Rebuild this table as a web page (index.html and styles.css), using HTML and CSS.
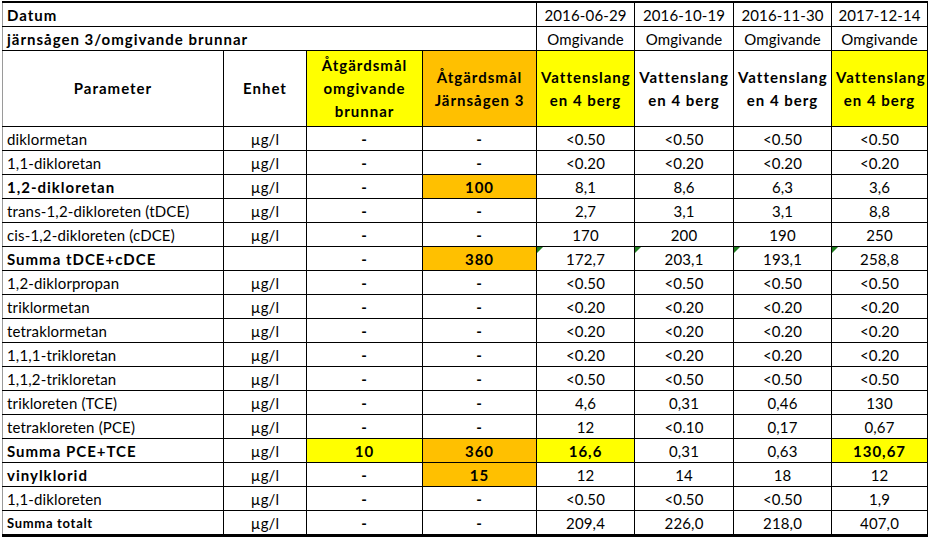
FILE: index.html
```html
<!DOCTYPE html>
<html>
<head>
<meta charset="utf-8">
<link rel="stylesheet" href="styles.css">
</head>
<body>
<table class="sheet">
<colgroup>
<col class="c1"><col class="c2"><col class="c3"><col class="c4"><col class="c5"><col class="c6"><col class="c7"><col class="c8">
</colgroup>
<tr class="r-top">
<td class="lbl b" colspan="4">Datum</td>
<td class="ctr sep">2016-06-29</td><td class="ctr">2016-10-19</td><td class="ctr">2016-11-30</td><td class="ctr">2017-12-14</td>
</tr>
<tr class="r-top">
<td class="lbl b" colspan="4">järnsågen 3/omgivande brunnar</td>
<td class="ctr sep">Omgivande</td><td class="ctr">Omgivande</td><td class="ctr">Omgivande</td><td class="ctr">Omgivande</td>
</tr>
<tr class="r-head">
<td class="ctr b">Parameter</td>
<td class="ctr b">Enhet</td>
<td class="ctr b yel">Åtgärdsmål<br>omgivande<br>brunnar</td>
<td class="ctr b org">Åtgärdsmål<br>Järnsågen 3</td>
<td class="ctr b yel sep">Vattenslang<br>en 4 berg</td>
<td class="ctr b">Vattenslang<br>en 4 berg</td>
<td class="ctr b">Vattenslang<br>en 4 berg</td>
<td class="ctr b yel">Vattenslang<br>en 4 berg</td>
</tr>
<tr><td class="lbl">diklormetan</td><td class="ctr">µg/l</td><td class="ctr b">-</td><td class="ctr b">-</td><td class="ctr sep">&lt;0.50</td><td class="ctr">&lt;0.50</td><td class="ctr">&lt;0.50</td><td class="ctr">&lt;0.50</td></tr>
<tr><td class="lbl">1,1-dikloretan</td><td class="ctr">µg/l</td><td class="ctr b">-</td><td class="ctr b">-</td><td class="ctr sep">&lt;0.20</td><td class="ctr">&lt;0.20</td><td class="ctr">&lt;0.20</td><td class="ctr">&lt;0.20</td></tr>
<tr><td class="lbl b">1,2-dikloretan</td><td class="ctr">µg/l</td><td class="ctr b">-</td><td class="ctr b org">100</td><td class="ctr sep">8,1</td><td class="ctr">8,6</td><td class="ctr">6,3</td><td class="ctr">3,6</td></tr>
<tr><td class="lbl">trans-1,2-dikloreten (tDCE)</td><td class="ctr">µg/l</td><td class="ctr b">-</td><td class="ctr b">-</td><td class="ctr sep">2,7</td><td class="ctr">3,1</td><td class="ctr">3,1</td><td class="ctr">8,8</td></tr>
<tr><td class="lbl">cis-1,2-dikloreten (cDCE)</td><td class="ctr">µg/l</td><td class="ctr b">-</td><td class="ctr b">-</td><td class="ctr sep">170</td><td class="ctr">200</td><td class="ctr">190</td><td class="ctr">250</td></tr>
<tr><td class="lbl b">Summa tDCE+cDCE</td><td class="ctr"></td><td class="ctr b">-</td><td class="ctr b org">380</td><td class="ctr sep flag">172,7</td><td class="ctr flag">203,1</td><td class="ctr flag">193,1</td><td class="ctr flag">258,8</td></tr>
<tr><td class="lbl">1,2-diklorpropan</td><td class="ctr">µg/l</td><td class="ctr b">-</td><td class="ctr b">-</td><td class="ctr sep">&lt;0.50</td><td class="ctr">&lt;0.50</td><td class="ctr">&lt;0.50</td><td class="ctr">&lt;0.50</td></tr>
<tr><td class="lbl">triklormetan</td><td class="ctr">µg/l</td><td class="ctr b">-</td><td class="ctr b">-</td><td class="ctr sep">&lt;0.20</td><td class="ctr">&lt;0.20</td><td class="ctr">&lt;0.20</td><td class="ctr">&lt;0.20</td></tr>
<tr><td class="lbl">tetraklormetan</td><td class="ctr">µg/l</td><td class="ctr b">-</td><td class="ctr b">-</td><td class="ctr sep">&lt;0.20</td><td class="ctr">&lt;0.20</td><td class="ctr">&lt;0.20</td><td class="ctr">&lt;0.20</td></tr>
<tr><td class="lbl">1,1,1-trikloretan</td><td class="ctr">µg/l</td><td class="ctr b">-</td><td class="ctr b">-</td><td class="ctr sep">&lt;0.20</td><td class="ctr">&lt;0.20</td><td class="ctr">&lt;0.20</td><td class="ctr">&lt;0.20</td></tr>
<tr><td class="lbl">1,1,2-trikloretan</td><td class="ctr">µg/l</td><td class="ctr b">-</td><td class="ctr b">-</td><td class="ctr sep">&lt;0.50</td><td class="ctr">&lt;0.50</td><td class="ctr">&lt;0.50</td><td class="ctr">&lt;0.50</td></tr>
<tr><td class="lbl">trikloreten (TCE)</td><td class="ctr">µg/l</td><td class="ctr b">-</td><td class="ctr b">-</td><td class="ctr sep">4,6</td><td class="ctr">0,31</td><td class="ctr">0,46</td><td class="ctr">130</td></tr>
<tr><td class="lbl">tetrakloreten (PCE)</td><td class="ctr">µg/l</td><td class="ctr b">-</td><td class="ctr b">-</td><td class="ctr sep">12</td><td class="ctr">&lt;0.10</td><td class="ctr">0,17</td><td class="ctr">0,67</td></tr>
<tr><td class="lbl b">Summa PCE+TCE</td><td class="ctr">µg/l</td><td class="ctr b yel">10</td><td class="ctr b org">360</td><td class="ctr b yel sep">16,6</td><td class="ctr">0,31</td><td class="ctr">0,63</td><td class="ctr b yel">130,67</td></tr>
<tr><td class="lbl b">vinylklorid</td><td class="ctr">µg/l</td><td class="ctr b">-</td><td class="ctr b org">15</td><td class="ctr sep">12</td><td class="ctr">14</td><td class="ctr">18</td><td class="ctr">12</td></tr>
<tr><td class="lbl">1,1-dikloreten</td><td class="ctr">µg/l</td><td class="ctr b">-</td><td class="ctr b">-</td><td class="ctr sep">&lt;0.50</td><td class="ctr">&lt;0.50</td><td class="ctr">&lt;0.50</td><td class="ctr">1,9</td></tr>
<tr class="r-last"><td class="lbl b small">Summa totalt</td><td class="ctr">µg/l</td><td class="ctr b">-</td><td class="ctr b">-</td><td class="ctr sep">209,4</td><td class="ctr">226,0</td><td class="ctr">218,0</td><td class="ctr">407,0</td></tr>
</table>
</body>
</html>
```
FILE: styles.css
```css
html, body {
  margin: 0;
  padding: 0;
  background: #ffffff;
}
body {
  font-family: "Lato", "Open Sans", sans-serif;
  font-size: 15px;
  letter-spacing: 0.15px;
  color: #000;
}
.sheet {
  border-collapse: collapse;
  table-layout: fixed;
  margin: 1px 0 0 2px;
  width: 925px;
  border-top: 2px solid #000;
  border-bottom: 3px solid #000;
  border-left: 1px solid #9a9a9a;
}
.c1 { width: 221px; }
.c2 { width: 83px; }
.c3 { width: 116px; }
.c4 { width: 114px; }
.c5 { width: 98px; }
.c6 { width: 99px; }
.c7 { width: 98px; }
.c8 { width: 96px; }
.sheet td {
  border: 1px solid #000;
  padding: 1px 4px 0 4px;
  height: 22px;
  line-height: 18px;
  vertical-align: middle;
  white-space: nowrap;
  overflow: hidden;
  position: relative;
}
.sheet tr td:first-child { border-left: none; }
.r-top td { height: 22px; }
.r-head td { height: 75px; line-height: 23px; padding-top: 0; }
.lbl { text-align: left; padding-left: 4px; }
.ctr { text-align: center; }
.b { font-weight: 700; letter-spacing: 1px; }
.small { font-size: 13px; letter-spacing: 0.7px; }
.yel { background: #ffff00; }
.org { background: #ffc000; }
.sep { border-left: 1px solid #3a3a3a; }
.flag::before {
  content: "";
  position: absolute;
  left: 0;
  top: 0;
  width: 0;
  height: 0;
  border-top: 6px solid #1e7d1e;
  border-right: 6px solid transparent;
}
```
